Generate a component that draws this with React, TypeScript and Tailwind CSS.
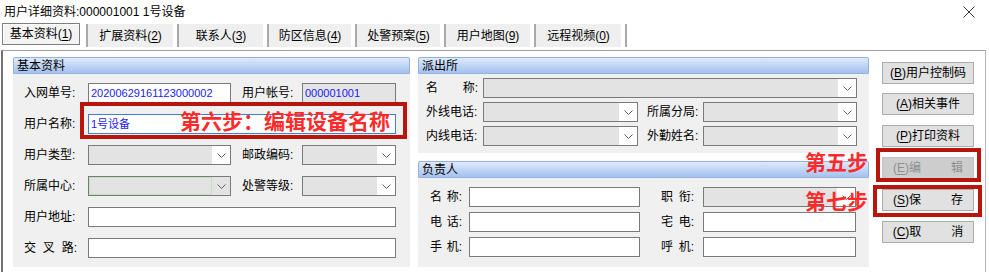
import type { ReactNode } from "react"

const tabs = [
  { name: "扩展资料", key: "2", w: "w-[91px]" },
  { name: "联系人", key: "3", w: "w-[90px]" },
  { name: "防区信息", key: "4", w: "w-[88px]" },
  { name: "处警预案", key: "5", w: "w-[89px]" },
  { name: "用户地图", key: "9", w: "w-[90px]" },
  { name: "远程视频", key: "0", w: "w-[91px]" },
]

function Chevron() {
  return (
    <svg width="9" height="5" viewBox="0 0 9 5" className="block">
      <path d="M0.5 0.5 L4.5 4.5 L8.5 0.5" fill="none" stroke="#606060" strokeWidth="1" />
    </svg>
  )
}

function GroupHeader({ title }: { title: string }) {
  return (
    <div className="h-[17px] border border-[#93b2e2] rounded-t-[2px] bg-linear-to-b from-[#dfeafb] to-[#a3c1ee] flex items-center pl-[3px] leading-none">
      {title}
    </div>
  )
}

function Label({ w, children }: { w: string; children: ReactNode }) {
  return <div className={`${w} shrink-0 leading-none whitespace-nowrap`}>{children}</div>
}

function Spaced({ w, parts }: { w: string; parts: string[] }) {
  return (
    <div className={`${w} flex justify-between leading-none`}>
      {parts.map((p) => (
        <span key={p}>{p}</span>
      ))}
    </div>
  )
}

function Field({ w, value, gray, focus }: { w: string; value?: string; gray?: boolean; focus?: boolean }) {
  return (
    <div
      className={`${w} h-[20px] shrink-0 border flex items-center pl-[2px] text-[11px] text-[#1b1bf0] leading-none ${
        focus ? "border-[#3d7fd6]" : "border-[#7a7a7a]"
      } ${gray ? "bg-[#e4e4e4]" : "bg-white"}`}
    >
      {value}
    </div>
  )
}

function Combo({ w, green }: { w: string; green?: boolean }) {
  return (
    <div className={`${w} h-[20px] shrink-0 border border-[#7a7a7a] bg-[#e3e3e3] flex`}>
      <div className={`flex-1 ${green ? "border border-[#bfe3bf]" : ""}`} />
      <div className={`w-[18px] flex items-center justify-center ${green ? "bg-[#e3e3e3]" : "bg-white"}`}>
        <Chevron />
      </div>
    </div>
  )
}

function Btn({ k, children, disabled }: { k: string; children: ReactNode; disabled?: boolean }) {
  return (
    <div
      className={`w-[92px] h-[22px] border flex items-center justify-center leading-none ${
        disabled ? "bg-[#cdcdcd] border-[#c2c2c2] text-[#8f8f8f]" : "bg-[#e1e1e1] border-[#adadad] text-black"
      }`}
    >
      <span>
        (<span className="underline underline-offset-2">{k}</span>)
      </span>
      {children}
    </div>
  )
}

export default function App() {
  return (
    <div className="w-[989px] h-[272px] bg-white overflow-hidden relative text-[12px] text-black font-['Liberation_Sans','Noto_Sans_CJK_SC',sans-serif]">
      {/* title */}
      <div className="h-[23px] flex items-center justify-between pl-[4px] pr-[14px]">
        <span className="leading-none">用户详细资料:000001001 1号设备</span>
        <svg width="12" height="12" viewBox="0 0 12 12">
          <path d="M0.5 0.5 L11.5 11.5 M11.5 0.5 L0.5 11.5" stroke="#333" strokeWidth="1" />
        </svg>
      </div>

      {/* tabs */}
      <div className="h-[24px] flex items-start pl-[2px]">
        <div className="w-[78px] h-[22px] border border-[#7f7f7f] bg-[#f3f3f3] shadow-[inset_1px_1px_0_#fff] flex items-center justify-center leading-none mr-[6px]">
          基本资料(<span className="underline underline-offset-2">1</span>)
        </div>
        {tabs.map((t) => (
          <div key={t.key} className={`${t.w} h-[23px] mt-[1px] flex shrink-0`}>
            <div className="w-[2px] bg-[#a9a9a9]" />
            <div className="flex-1 mr-[4px] bg-[#efefef] flex items-center justify-center leading-none">
              {t.name}(<span className="underline underline-offset-2">{t.key}</span>)
            </div>
          </div>
        ))}
        <div className="w-[2px] h-[23px] mt-[1px] bg-[#a9a9a9]" />
      </div>

      {/* panel */}
      <div className="mt-[3px] ml-[1px] w-[985px] h-[230px] border-t border-l-2 border-r border-t-[#a0a0a0] border-l-[#727272] border-r-[#b4b4b4] flex pl-[10px] pt-[6px]">
        {/* 基本资料 */}
        <div className="w-[397px] shrink-0">
          <GroupHeader title="基本资料" />
          <div className="h-[193px] bg-[#f0f0f0] pt-[9px] pl-[11px] flex flex-col gap-[11px]">
            <div className="flex items-center">
              <Label w="w-[64px]">入网单号:</Label>
              <Field w="w-[143px]" value="20200629161123000002" />
              <Label w="w-[60px] pl-[11px] box-content">用户帐号:</Label>
              <Field w="w-[94px]" value="000001001" gray />
            </div>
            <div className="flex items-center">
              <Label w="w-[64px]">用户名称:</Label>
              <Field w="w-[308px]" value="1号设备" focus />
            </div>
            <div className="flex items-center">
              <Label w="w-[64px]">用户类型:</Label>
              <Combo w="w-[143px]" />
              <Label w="w-[60px] pl-[11px] box-content">邮政编码:</Label>
              <Combo w="w-[94px]" />
            </div>
            <div className="flex items-center">
              <Label w="w-[64px]">所属中心:</Label>
              <Combo w="w-[143px]" green />
              <Label w="w-[60px] pl-[11px] box-content">处警等级:</Label>
              <Combo w="w-[94px]" />
            </div>
            <div className="flex items-center">
              <Label w="w-[64px]">用户地址:</Label>
              <Field w="w-[308px]" />
            </div>
            <div className="flex items-center">
              <Label w="w-[64px]">
                <Spaced w="w-[53px]" parts={["交", "叉", "路:"]} />
              </Label>
              <Field w="w-[308px]" />
            </div>
          </div>
        </div>

        {/* 派出所 / 负责人 */}
        <div className="w-[451px] shrink-0 ml-[8px]">
          <GroupHeader title="派出所" />
          <div className="h-[79px] bg-[#f0f0f0] pt-[4px] pl-[8px] flex flex-col gap-[4px]">
            <div className="flex items-center">
              <Label w="w-[57px]">
                <Spaced w="w-[52px]" parts={["名", "称:"]} />
              </Label>
              <Combo w="w-[374px]" />
            </div>
            <div className="flex items-center">
              <Label w="w-[57px]">外线电话:</Label>
              <Combo w="w-[155px]" />
              <Label w="w-[56px] pl-[9px] box-content">所属分局:</Label>
              <Combo w="w-[154px]" />
            </div>
            <div className="flex items-center">
              <Label w="w-[57px]">内线电话:</Label>
              <Combo w="w-[155px]" />
              <Label w="w-[56px] pl-[9px] box-content">外勤姓名:</Label>
              <Combo w="w-[154px]" />
            </div>
          </div>

          <div className="mt-[8px]">
            <GroupHeader title="负责人" />
            <div className="h-[89px] bg-[#f0f0f0] pt-[9px] pl-[12px] flex flex-col gap-[5px]">
              {[
                { a: ["名", "称:"], b: ["职", "衔:"], combo: true },
                { a: ["电", "话:"], b: ["宅", "电:"] },
                { a: ["手", "机:"], b: ["呼", "机:"] },
              ].map((r) => (
                <div key={r.a[0]} className="flex items-center">
                  <Label w="w-[39px]">
                    <Spaced w="w-[32px]" parts={r.a} />
                  </Label>
                  <Field w="w-[171px]" />
                  <Label w="w-[42px] pl-[21px] box-content">
                    <Spaced w="w-[33px]" parts={r.b} />
                  </Label>
                  {r.combo ? <Combo w="w-[153px]" /> : <Field w="w-[153px]" />}
                </div>
              ))}
            </div>
          </div>
        </div>

        {/* buttons */}
        <div className="ml-[13px] pt-[5px] flex flex-col">
          <Btn k="B">用户控制码</Btn>
          <div className="mt-[9px]">
            <Btn k="A">相关事件</Btn>
          </div>
          <div className="mt-[10px]">
            <Btn k="P">打印资料</Btn>
          </div>
          <div className="mt-[10px]">
            <Btn k="E" disabled>
              编<span className="w-[30px]" />辑
            </Btn>
          </div>
          <div className="mt-[10px]">
            <Btn k="S">
              保<span className="w-[30px]" />存
            </Btn>
          </div>
          <div className="mt-[10px]">
            <Btn k="C">
              取<span className="w-[30px]" />消
            </Btn>
          </div>
        </div>
      </div>

      {/* annotations */}
      <div className="absolute left-[80px] top-[102px] w-[327px] h-[37px] border-[4px] border-[#b8150d]" />
      <div className="absolute left-[180px] top-[106px] text-[21px] font-bold text-[#ff2b2b] leading-[28px] font-['Noto_Sans_CJK_SC',sans-serif]">
        第六步：编辑设备名称
      </div>
      <div className="absolute left-[876px] top-[148px] w-[105px] h-[34px] border-[4px] border-[#b8150d]" />
      <div className="absolute left-[873px] top-[185px] w-[109px] h-[32px] border-[4px] border-[#b8150d]" />
      <div className="absolute left-[805px] top-[147px] text-[21px] font-bold text-[#ff2b2b] leading-[28px] font-['Noto_Sans_CJK_SC',sans-serif]">
        第五步
      </div>
      <div className="absolute left-[805px] top-[186px] text-[21px] font-bold text-[#ff2b2b] leading-[28px] font-['Noto_Sans_CJK_SC',sans-serif]">
        第七步
      </div>
    </div>
  )
}
